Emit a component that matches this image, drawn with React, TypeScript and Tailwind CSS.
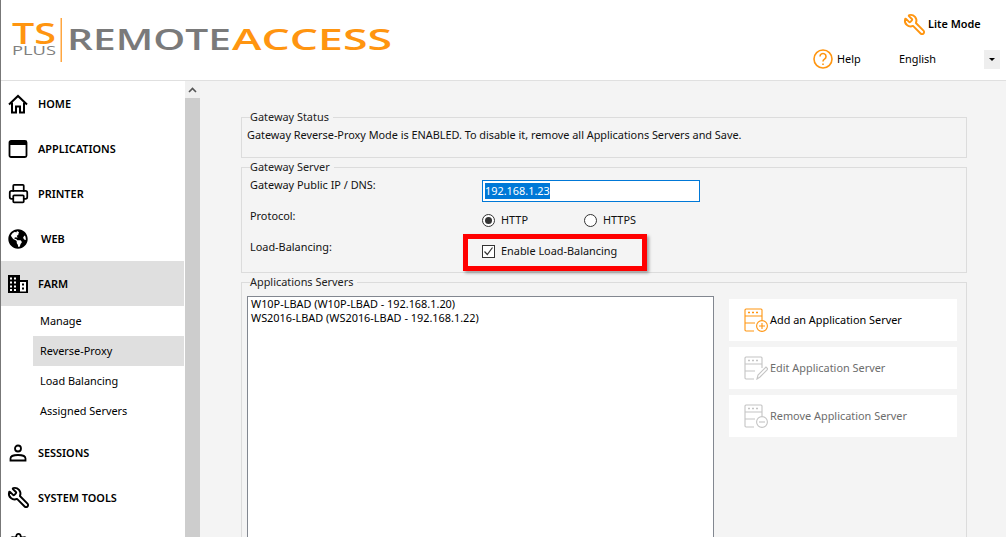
import { Printer, Settings, Wrench } from "lucide-react";
import { FaGlobeAmericas } from "react-icons/fa";
import type { ReactNode } from "react";

const font = "font-['Noto_Sans','Open_Sans',sans-serif]";

const Logo = () => (
  <svg width="400" height="70" viewBox="0 0 400 70" className="block">
    <text x="12" y="44" textLength="44" lengthAdjust="spacingAndGlyphs" fontFamily="Open Sans" fontSize="29" fontWeight="600" fill="#ff9510">
      TS
    </text>
    <text x="12" y="55" textLength="44" lengthAdjust="spacingAndGlyphs" fontFamily="Open Sans" fontSize="13" fill="#808080">
      PLUS
    </text>
    <rect x="60.5" y="18" width="1.5" height="44" fill="#ffa640" />
    <text x="67" y="50" textLength="164" lengthAdjust="spacingAndGlyphs" fontFamily="Open Sans" fontSize="29" fontWeight="600" fill="#7a7a7a">
      REMOTE
    </text>
    <text x="232" y="50" textLength="160" lengthAdjust="spacingAndGlyphs" fontFamily="Open Sans" fontSize="29" fontWeight="600" fill="#ff9510">
      ACCESS
    </text>
  </svg>
);

const HomeIcon = () => (
  <svg width="20" height="20" viewBox="0 0 20 20" fill="none" stroke="#000" strokeWidth="2">
    <path d="M1 10.500L10 2l9 8.500" />
    <path d="M4 8.500V18.500H8V12.500H12V18.500H16V8.500" />
  </svg>
);

const AppWindowIcon = () => (
  <svg width="20" height="18" viewBox="0 0 20 18">
    <rect x="1.500" y="1" width="17" height="16" rx="1.500" fill="none" stroke="#000" strokeWidth="1.800" />
    <rect x="1.500" y="1" width="17" height="4" fill="#000" />
  </svg>
);

const FarmIcon = () => (
  <svg width="20" height="18" viewBox="0 0 20 18">
    <path d="M0 0h12v5h8v13H0z" fill="#000" />
    <g fill="#fff">
      <rect x="2" y="2.500" width="2" height="2" />
      <rect x="6" y="2.500" width="2" height="2" />
      <rect x="2" y="6.500" width="2" height="2" />
      <rect x="6" y="6.500" width="2" height="2" />
      <rect x="2" y="10.500" width="2" height="2" />
      <rect x="6" y="10.500" width="2" height="2" />
      <rect x="2" y="14" width="2" height="2" />
      <rect x="6" y="14" width="2" height="2" />
      <rect x="12" y="7" width="6" height="9.500" />
    </g>
    <g fill="#000">
      <rect x="14" y="8.500" width="2" height="2" />
      <rect x="14" y="12.500" width="2" height="2" />
    </g>
  </svg>
);

const PersonIcon = () => (
  <svg width="18" height="18" viewBox="0 0 18 18" fill="none" stroke="#000" strokeWidth="1.800">
    <circle cx="9" cy="4.500" r="3" />
    <path d="M1.500 16.500v-2c0-2 2.500-3.500 7.500-3.500s7.500 1.500 7.500 3.500v2z" />
  </svg>
);

const ServerIcon = ({ color, badge }: { color: string; badge: "add" | "edit" | "remove" }) => (
  <svg width="24" height="24" viewBox="0 0 24 24" fill="none" stroke={color} strokeWidth="1.100">
    <path d="M10 23H2a1 1 0 0 1-1-1V2a1 1 0 0 1 1-1h15a1 1 0 0 1 1 1v10" />
    <path d="M1 8h17M1 15h10" />
    <path d="M4 4.500h2M8 4.500h2M12 4.500h2" strokeWidth="1.400" />
    {badge === "add" && (
      <g>
        <circle cx="18" cy="18" r="5.400" fill="#fff" />
        <path d="M18 15v6M15 18h6" />
      </g>
    )}
    {badge === "remove" && (
      <g>
        <circle cx="18" cy="18" r="5.400" fill="#fff" />
        <path d="M15 18h6" />
      </g>
    )}
    {badge === "edit" && <path d="M13 23l1-4 8-8 2 2-8 8z" fill="#fff" />}
  </svg>
);

const NavItem = ({ icon, label, active, pad }: { icon: ReactNode; label?: string; active?: boolean; pad?: boolean }) => (
  <div className={`flex h-[45px] items-center ${active ? "bg-[#dfdfdf]" : ""}`}>
    <div className="flex w-[37px] justify-center pr-[3px]">{icon}</div>
    {label && <span className={`pt-[2px] text-[10.900px] font-semibold text-black ${pad ? "ml-[3px]" : ""}`}>{label}</span>}
  </div>
);

const SubItem = ({ label, active }: { label: string; active?: boolean }) => (
  <div className={`ml-[32px] flex h-[30px] items-center pl-[7px] text-[10.900px] text-black ${active ? "bg-[#dfdfdf]" : ""}`}>
    {label}
  </div>
);

const ServerButton = ({ label, badge, disabled }: { label: string; badge: "add" | "edit" | "remove"; disabled?: boolean }) => (
  <div className="flex h-[42px] w-[228px] items-center bg-white pl-[15px]">
    <ServerIcon badge={badge} color={disabled ? "#c4c4c4" : "#ff9510"} />
    <span className={`ml-[2px] text-[10.900px] ${disabled ? "text-[#6d6d6d]" : "text-black"}`}>{label}</span>
  </div>
);

const Group = ({ title, className, children }: { title: string; className: string; children: ReactNode }) => (
  <fieldset className={`border border-[#dcdcdc] pl-[5px] ${className}`}>
    <legend className="ml-[3px] pl-0 pr-[4px] text-[10.900px] leading-[14px] text-[#222]">{title}</legend>
    {children}
  </fieldset>
);

export default function App() {
  return (
    <div className={`relative flex h-[537px] w-[1006px] flex-col overflow-hidden border-l border-[#777] bg-white ${font}`}>
      {/* header */}
      <header className="flex h-[81px] shrink-0 justify-between border-b border-[#e0e0e0] bg-white">
        <div className="-ml-[1px]">
          <Logo />
        </div>
        <div className="flex w-[193px] flex-col text-[10.900px] text-black">
          <div className="flex items-center pl-[90px] pt-[13px] font-semibold">
            <Wrench size={23} color="#ff9510" strokeWidth={2} className="-scale-x-100" />
            <span className="ml-[2px]">Lite Mode</span>
          </div>
          <div className="mt-[13px] flex items-center">
            <svg width="20" height="20" viewBox="0 0 20 20" fill="none" stroke="#ff9510" strokeWidth="1.600">
              <circle cx="10" cy="10" r="9" />
              <path d="M7 7.500a3 3 0 1 1 4.500 2.600c-1 .6-1.500 1.200-1.500 2.400" />
              <path d="M10 14.500v1.500" />
            </svg>
            <span className="ml-[4px] w-[62px]">Help</span>
            <span className="w-[85px]">English</span>
            <div className="flex h-[19px] w-[16px] items-center justify-center bg-[#eeeeee]">
              <span className="h-0 w-0 border-x-[3px] border-t-[3px] border-x-transparent border-t-black" />
            </div>
          </div>
        </div>
      </header>

      <div className="flex min-h-0 flex-1">
        {/* sidebar */}
        <nav className="w-[184px] shrink-0 overflow-hidden bg-white pr-[1px]">
          <NavItem icon={<HomeIcon />} label="HOME" />
          <NavItem icon={<AppWindowIcon />} label="APPLICATIONS" />
          <NavItem icon={<Printer size={21} color="#000" strokeWidth={2} />} label="PRINTER" />
          <NavItem icon={<FaGlobeAmericas size={20} color="#000" />} label="WEB" pad />
          <NavItem icon={<FarmIcon />} label="FARM" active />
          <SubItem label="Manage" />
          <SubItem label="Reverse-Proxy" active />
          <SubItem label="Load Balancing" />
          <SubItem label="Assigned Servers" />
          <div className="h-[4px]" />
          <NavItem icon={<PersonIcon />} label="SESSIONS" />
          <NavItem icon={<Wrench size={23} color="#000" strokeWidth={2} className="-scale-x-100" />} label="SYSTEM TOOLS" />
          <NavItem icon={<Settings size={21} color="#000" strokeWidth={2} />} />
        </nav>

        {/* scrollbar */}
        <div className="flex w-[15px] shrink-0 flex-col bg-[#cdcdcd]">
          <div className="flex h-[17px] items-center justify-center bg-[#f0f0f0]">
            <svg width="9" height="6" viewBox="0 0 9 6" fill="none" stroke="#555" strokeWidth="1.600">
              <path d="M1 5l3.500-3.500L8 5" />
            </svg>
          </div>
        </div>

        {/* content */}
        <main className="flex-1 bg-[#f4f4f4] pl-[41px] pr-[39px] pt-[29px] text-[10.900px] text-[#111]">
          <Group title="Gateway Status" className="h-[48px]">
            <p className="mt-[3px] tracking-[-0.02px]">Gateway Reverse-Proxy Mode is ENABLED. To disable it, remove all Applications Servers and Save.</p>
          </Group>

          <Group title="Gateway Server" className="mt-[2px] h-[113px]">
            <div className="flex pl-[3px]">
              <div className="w-[232px] pt-[3px]">
                <p className="h-[31px]">Gateway Public IP / DNS:</p>
                <p className="h-[31px]">Protocol:</p>
                <p>Load-Balancing:</p>
              </div>
              <div>
                <div className="mt-[6px] flex h-[22px] w-[218px] items-center border border-[#0078d7] bg-white pl-[2px]">
                  <span className="bg-[#0078d7] text-white">192.168.1.23</span>
                </div>
                <div className="mt-[11px] flex h-[14px] items-center">
                  <span className="flex h-[13px] w-[13px] items-center justify-center rounded-full border border-[#333] bg-white">
                    <span className="h-[7px] w-[7px] rounded-full bg-[#333]" />
                  </span>
                  <span className="ml-[6px] w-[83px]">HTTP</span>
                  <span className="h-[13px] w-[13px] rounded-full border border-[#333] bg-white" />
                  <span className="ml-[6px]">HTTPS</span>
                </div>
                <div className="mt-[17px] flex h-[14px] items-center">
                  <span className="flex h-[13px] w-[13px] items-center justify-center border border-[#333] bg-white">
                    <svg width="11" height="11" viewBox="0 0 11 11" fill="none" stroke="#333" strokeWidth="1.200">
                      <path d="M1.500 5.500l2.800 3L9.500 1.500" />
                    </svg>
                  </span>
                  <span className="ml-[6px]">Enable Load-Balancing</span>
                </div>
              </div>
            </div>
          </Group>

          <Group title="Applications Servers" className="mt-[2px] h-[300px]">
            <div className="mt-[7px] flex">
              <div className="h-[280px] w-[467px] border border-[#828790] bg-white px-[3px] leading-[14px] text-black">
                <p>W10P-LBAD (W10P-LBAD - 192.168.1.20)</p>
                <p>WS2016-LBAD (WS2016-LBAD - 192.168.1.22)</p>
              </div>
              <div className="ml-[15px] mt-[3px] flex flex-col gap-[6px]">
                <ServerButton label="Add an Application Server" badge="add" />
                <ServerButton label="Edit Application Server" badge="edit" disabled />
                <ServerButton label="Remove Application Server" badge="remove" disabled />
              </div>
            </div>
          </Group>
        </main>
      </div>

      {/* red callout drawn over the screenshot */}
      <div className="absolute left-[462px] top-[234px] h-[37px] w-[184px] border-[5px] border-[#ff0000] shadow-[2px_2px_3px_rgba(0,0,0,0.35)]" />
    </div>
  );
}
